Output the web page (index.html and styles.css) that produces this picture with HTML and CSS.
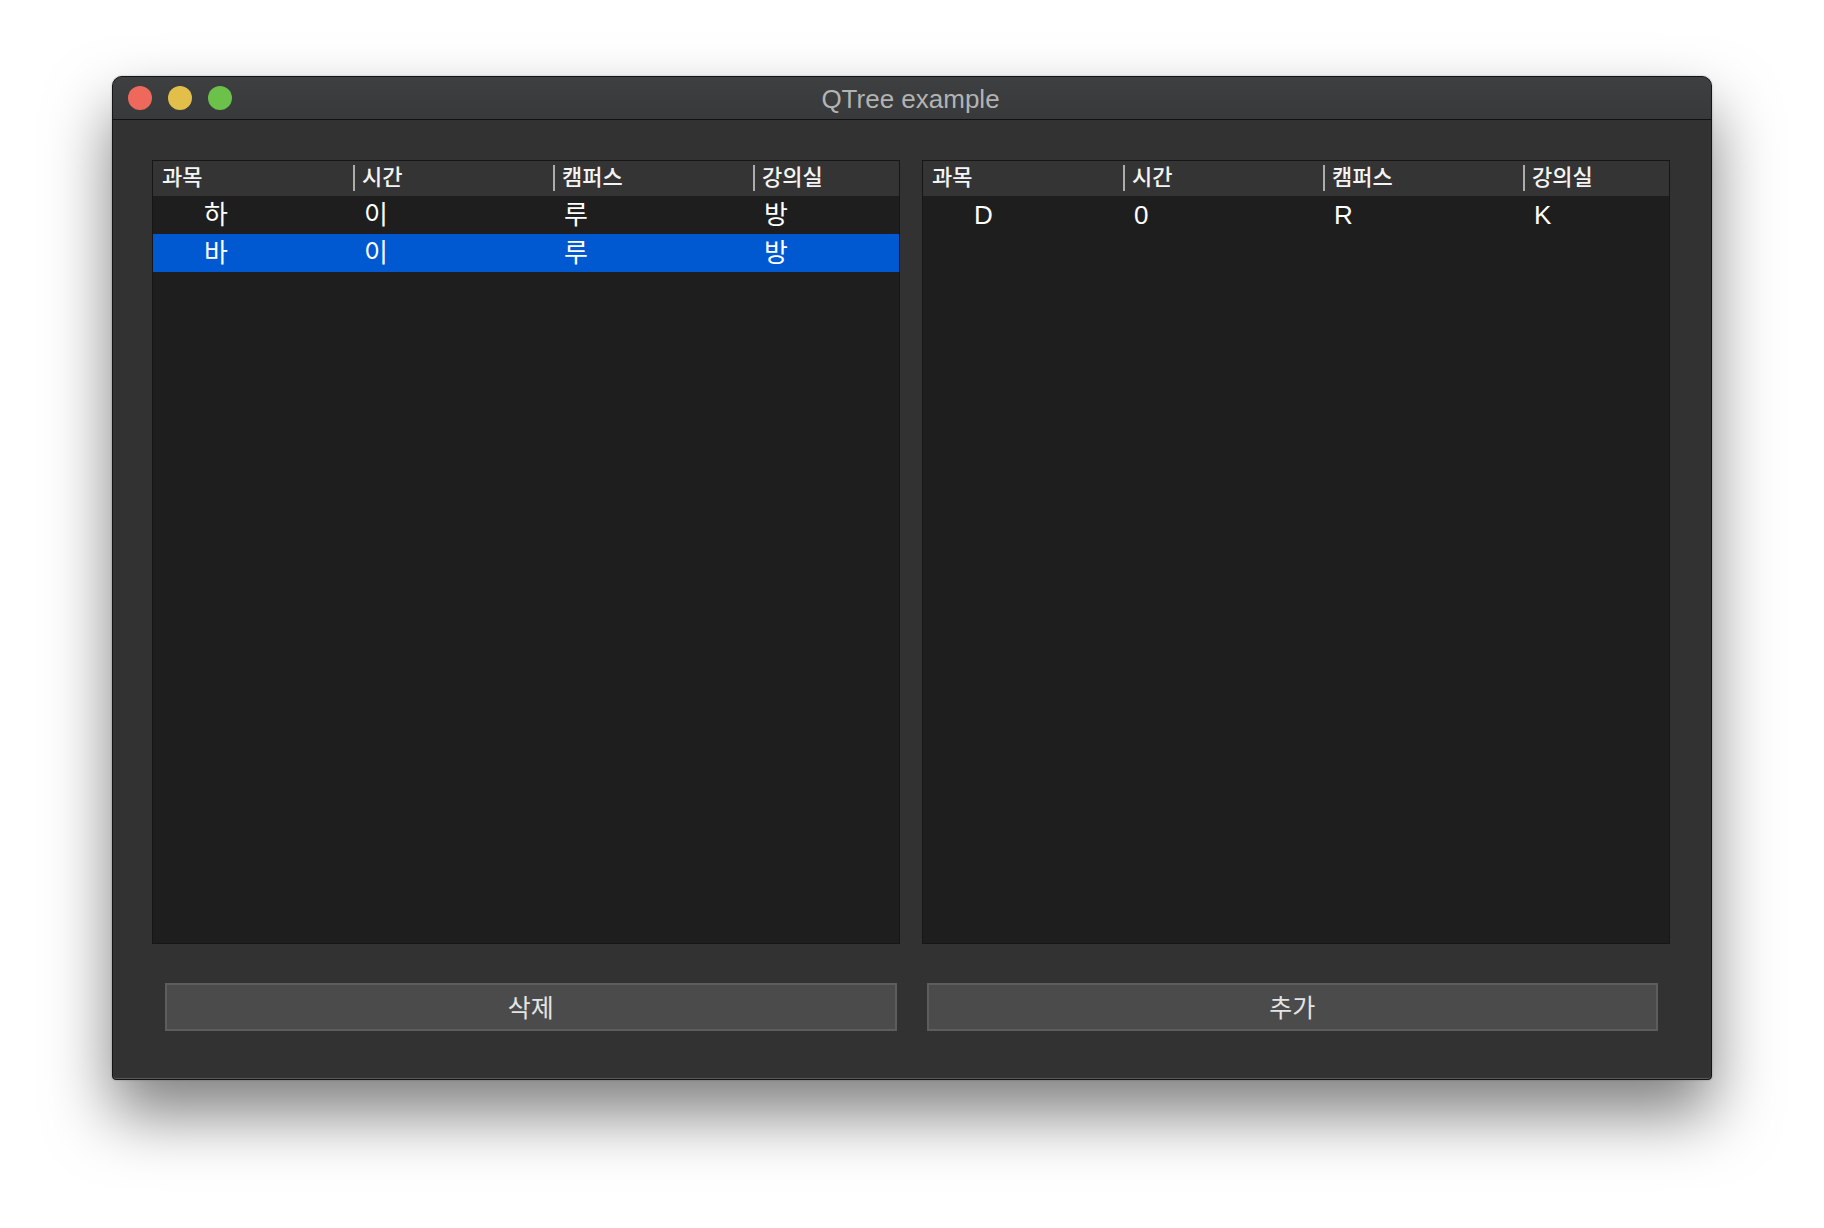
FILE: index.html
```html
<!DOCTYPE html>
<html lang="ko">
<head>
<meta charset="utf-8">
<title>QTree example</title>
<link rel="stylesheet" href="styles.css">
</head>
<body>
<div class="window">
  <div class="titlebar">
    <div class="lights">
      <span class="light red"></span>
      <span class="light yellow"></span>
      <span class="light green"></span>
    </div>
    <div class="title">QTree example</div>
    <div></div>
  </div>
  <div class="content">
    <div class="trees">
      <div class="tree">
        <div class="header">
          <div class="hcell first">과목</div>
          <div class="hcell"><span class="sep"></span>시간</div>
          <div class="hcell"><span class="sep"></span>캠퍼스</div>
          <div class="hcell"><span class="sep"></span>강의실</div>
        </div>
        <div class="row">
          <div class="cell first">하</div>
          <div class="cell">이</div>
          <div class="cell">루</div>
          <div class="cell">방</div>
        </div>
        <div class="row selected">
          <div class="cell first">바</div>
          <div class="cell">이</div>
          <div class="cell">루</div>
          <div class="cell">방</div>
        </div>
      </div>
      <div class="tree">
        <div class="header">
          <div class="hcell first">과목</div>
          <div class="hcell"><span class="sep"></span>시간</div>
          <div class="hcell"><span class="sep"></span>캠퍼스</div>
          <div class="hcell"><span class="sep"></span>강의실</div>
        </div>
        <div class="row">
          <div class="cell first">D</div>
          <div class="cell">0</div>
          <div class="cell">R</div>
          <div class="cell">K</div>
        </div>
      </div>
    </div>
    <div class="buttons">
      <button class="btn">삭제</button>
      <button class="btn">추가</button>
    </div>
  </div>
</div>
</body>
</html>
```
FILE: styles.css
```css
html, body {
  margin: 0;
  padding: 0;
  background: #ffffff;
}
html {
  height: 100%;
}
body {
  box-sizing: border-box;
  min-height: 1228px;
  padding: 76px 0 0 112px;
  font-family: "Liberation Sans", "Noto Sans CJK KR", sans-serif;
}
.window {
  width: 1598px;
  height: 1002px;
  border: 1px solid #151515;
  border-radius: 10px 10px 4px 4px;
  background: #323232;
  box-shadow: 0 34px 64px rgba(0, 0, 0, 0.5), 0 0 2px rgba(0, 0, 0, 0.3), inset 0 -1px 0 #5a5a5a;
  overflow: hidden;
  display: flex;
  flex-direction: column;
}
.titlebar {
  height: 42px;
  border-bottom: 1px solid #111111;
  background: linear-gradient(#3e3f41, #38393b);
  display: grid;
  grid-template-columns: 1fr auto 1fr;
  align-items: center;
}
.lights {
  display: flex;
  gap: 16px;
  padding-left: 15px;
}
.light {
  width: 24px;
  height: 24px;
  border-radius: 50%;
}
.red { background: #ee695c; }
.yellow { background: #e2bf4a; }
.green { background: #6bc149; }
.title {
  color: #b3b3b3;
  font-size: 26px;
  line-height: 30px;
  padding-top: 2px;
  padding-right: 3px;
}
.content {
  flex: 1;
  display: flex;
  flex-direction: column;
  padding: 40px 0 0 0;
}
.trees {
  display: grid;
  grid-template-columns: 1fr 1fr;
  gap: 22px;
  padding: 0 41px 0 39px;
}
.tree {
  height: 782px;
  border: 1px solid #161616;
  background: #1e1e1e;
  font-family: "Noto Sans CJK KR", "Liberation Sans", sans-serif;
}
.header {
  height: 35px;
  background: #343434;
  display: grid;
  grid-template-columns: 200px 200px 200px 1fr;
  color: #f4f4f4;
  font-size: 22px;
  font-weight: 500;
}
.hcell {
  display: flex;
  align-items: center;
  height: 35px;
  line-height: 30px;
  padding-bottom: 7px;
  box-sizing: border-box;
}
.hcell.first {
  padding-left: 9px;
}
.sep {
  width: 2px;
  height: 26px;
  margin-top: 6px;
  background: #adadad;
  margin-right: 7px;
}
.row {
  height: 38px;
  display: grid;
  grid-template-columns: 200px 200px 200px 1fr;
  align-items: center;
  color: #ffffff;
  font-size: 26px;
  font-family: "Liberation Sans", "Noto Sans CJK KR", sans-serif;
}
.row.selected {
  background: #0059d1;
}
.cell {
  padding-left: 11px;
  line-height: 38px;
  padding-bottom: 1px;
}
.cell.first {
  padding-left: 51px;
}
.buttons {
  display: grid;
  grid-template-columns: 1fr 1fr;
  gap: 30px;
  padding: 0 53px 0 52px;
  margin-top: 39px;
}
.btn {
  height: 48px;
  background: #4b4b4b;
  border: 2px solid #5d5d5d;
  color: #e4e4e4;
  font-family: "Noto Sans CJK KR", "Liberation Sans", sans-serif;
  font-size: 25px;
  line-height: 40px;
  padding: 0 0 2px 0;
  margin: 0;
}
```
